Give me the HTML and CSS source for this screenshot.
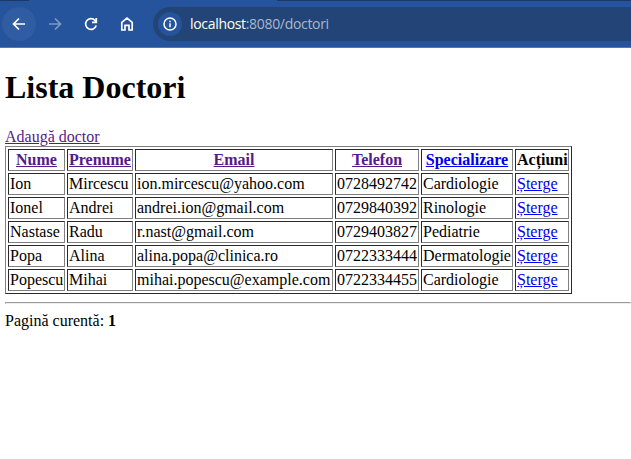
FILE: index.html
```html
<!DOCTYPE html>
<html lang="ro">
<head>
<meta charset="utf-8">
<title>Lista Doctori</title>
<link rel="stylesheet" href="styles.css">
</head>
<body>
<header class="toolbar">
  <div class="tabline"><span></span><span></span></div>
  <div class="bar">
    <nav class="controls">
      <span class="btn active"><svg viewBox="0 0 16 16"><path d="M14 8H2.500M8 2.500L2.500 8 8 13.500"/></svg></span>
      <span class="btn dim"><svg viewBox="0 0 16 16"><path d="M2 8h11.500M8 2.500L13.500 8 8 13.500"/></svg></span>
      <span class="btn"><svg viewBox="0 0 16 16"><path d="M13.200 9.500A5.400 5.400 0 1 1 12 4.300L13.300 5.600M13.300 2v4.300H9"/></svg></span>
      <span class="btn"><svg viewBox="0 0 16 16"><path d="M2.800 6.300 8 2.200l5.200 4.100V14H10V9.300H6V14H2.800z"/></svg></span>
    </nav>
    <div class="address">
      <span class="info"><svg viewBox="0 0 16 16"><circle cx="8" cy="8" r="6"/><path d="M8 7.200v4M8 4.700v1.500"/></svg></span>
      <span class="url"><b>localhost</b>:8080/doctori</span>
    </div>
  </div>
</header>
<main class="page">
  <h1>Lista Doctori</h1>
  <a class="visited" href="#">Adaugă doctor</a>
  <table>
    <colgroup><col class="c1"><col class="c2"><col class="c3"><col class="c4"><col class="c5"><col class="c6"></colgroup>
    <thead><tr><th><a class="visited" href="#">Nume</a></th><th><a class="visited" href="#">Prenume</a></th><th><a class="visited" href="#">Email</a></th><th><a class="visited" href="#">Telefon</a></th><th><a href="#">Specializare</a></th><th>Acțiuni</th></tr></thead>
    <tbody>
    <tr><td>Ion</td><td>Mircescu</td><td>ion.mircescu@yahoo.com</td><td>0728492742</td><td>Cardiologie</td><td><a href="#">Șterge</a></td></tr>
    <tr><td>Ionel</td><td>Andrei</td><td>andrei.ion@gmail.com</td><td>0729840392</td><td>Rinologie</td><td><a href="#">Șterge</a></td></tr>
    <tr><td>Nastase</td><td>Radu</td><td>r.nast@gmail.com</td><td>0729403827</td><td>Pediatrie</td><td><a href="#">Șterge</a></td></tr>
    <tr><td>Popa</td><td>Alina</td><td>alina.popa@clinica.ro</td><td>0722333444</td><td>Dermatologie</td><td><a href="#">Șterge</a></td></tr>
    <tr><td>Popescu</td><td>Mihai</td><td>mihai.popescu@example.com</td><td>0722334455</td><td>Cardiologie</td><td><a href="#">Șterge</a></td></tr>
    </tbody>
  </table>
  <hr>
  <p>Pagină curentă: <b>1</b></p>
</main>
</body>
</html>
```
FILE: styles.css
```css
body { margin: 0; background: #fff; font: 16px/18px "Liberation Serif", serif; color: #000; overflow: hidden; }
.toolbar { box-sizing: border-box; height: 48px; background: #25549c; border-bottom: 1px solid #5179b3; }
.tabline { height: 1px; display: flex; justify-content: space-between; }
.tabline span { background: #1b3866; width: 29px; }
.tabline span + span { width: 354px; }
.bar { display: flex; padding: 6px 0 0 2px; }
.controls { display: flex; gap: 2px; flex: none; width: 151px; }
.btn { width: 34px; height: 34px; display: flex; align-items: center; justify-content: center; border-radius: 50%; }
.active { background: #305da1; }
.dim svg { opacity: .4; }
svg { width: 16px; height: 16px; fill: none; stroke: #fff; stroke-width: 1.700; }
.address { flex: 1; height: 34px; border-radius: 17px 0 0 17px; background: #234476; display: flex; align-items: center; color: #a9b8cf; font: 14px/20px "Open Sans", sans-serif; }
.info { width: 24px; height: 24px; margin: 0 8px 0 5px; border-radius: 50%; background: #25549c; display: flex; align-items: center; justify-content: center; }
.info svg { stroke-width: 1.500; }
.url { letter-spacing: -.32px; }
.url b { font-weight: 400; color: #fff; }
.page { padding: 0 0 0 5px; }
h1 { font-size: 32px; line-height: 36px; margin: 21px 0 23px; }
a { color: #0000ee; }
a.visited { color: #551a8b; }
table { table-layout: fixed; width: 567px; border: 1px solid; border-color: #808080 #2b2b2b #2b2b2b #808080; border-spacing: 2px; }
th, td { height: 18px; padding: 1px; border: 1px solid; border-color: #2b2b2b #808080 #808080 #2b2b2b; white-space: nowrap; }
.c1 { width: 57px; } .c2 { width: 66px; } .c3 { width: 198px; } .c4 { width: 84px; } .c5 { width: 92px; } .c6 { width: 54px; }
hr { margin: 8px 0; }
p { margin: 0; }
```
